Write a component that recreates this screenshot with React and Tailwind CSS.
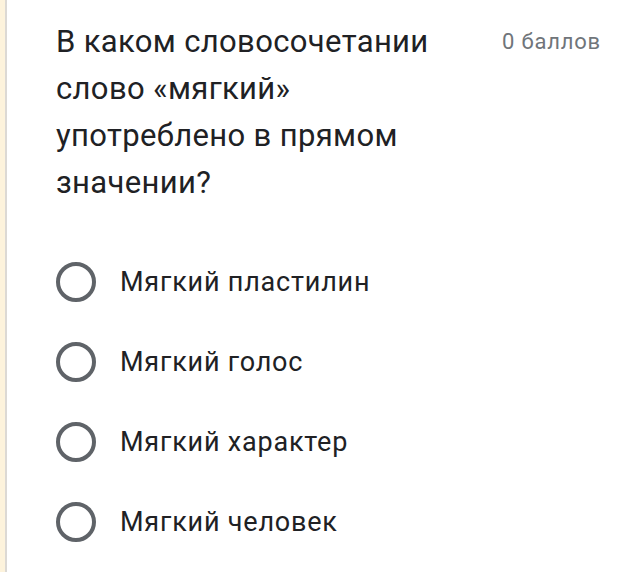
import React from "react";

const options = [
  "Мягкий пластилин",
  "Мягкий голос",
  "Мягкий характер",
  "Мягкий человек",
];

const Radio = () => (
  <span className="block h-[40px] w-[40px] shrink-0 rounded-full border-[4px] border-[#5f6368]" />
);

const App = () => {
  return (
    <div className="flex h-[572px] w-full bg-white font-['Roboto',sans-serif]">
      <div className="w-[5px] shrink-0 bg-[#fdf3dc]" />
      <div className="w-[2px] shrink-0 bg-[#dcd9d4]" />
      <div className="flex-1 pl-[49px] pr-[16px] pt-[18px]">
        <div className="flex items-start justify-between">
          <h1 className="w-[400px] text-[31px] leading-[47px] tracking-[0.35px] text-[#202124]">
            В каком словосочетании слово «мягкий» употреблено в прямом значении?
          </h1>
          <span className="pt-[10px] text-[22px] leading-[28px] tracking-[0.8px] text-[#70757a]">0 баллов</span>
        </div>
        <ul className="mt-[56px] flex flex-col gap-[40px]">
          {options.map((opt) => (
            <li key={opt} className="flex h-[40px] items-center gap-[24px]">
              <Radio />
              <span className="text-[27px] tracking-[0.8px] text-[#202124]">{opt}</span>
            </li>
          ))}
        </ul>
      </div>
    </div>
  );
};

export default App;
